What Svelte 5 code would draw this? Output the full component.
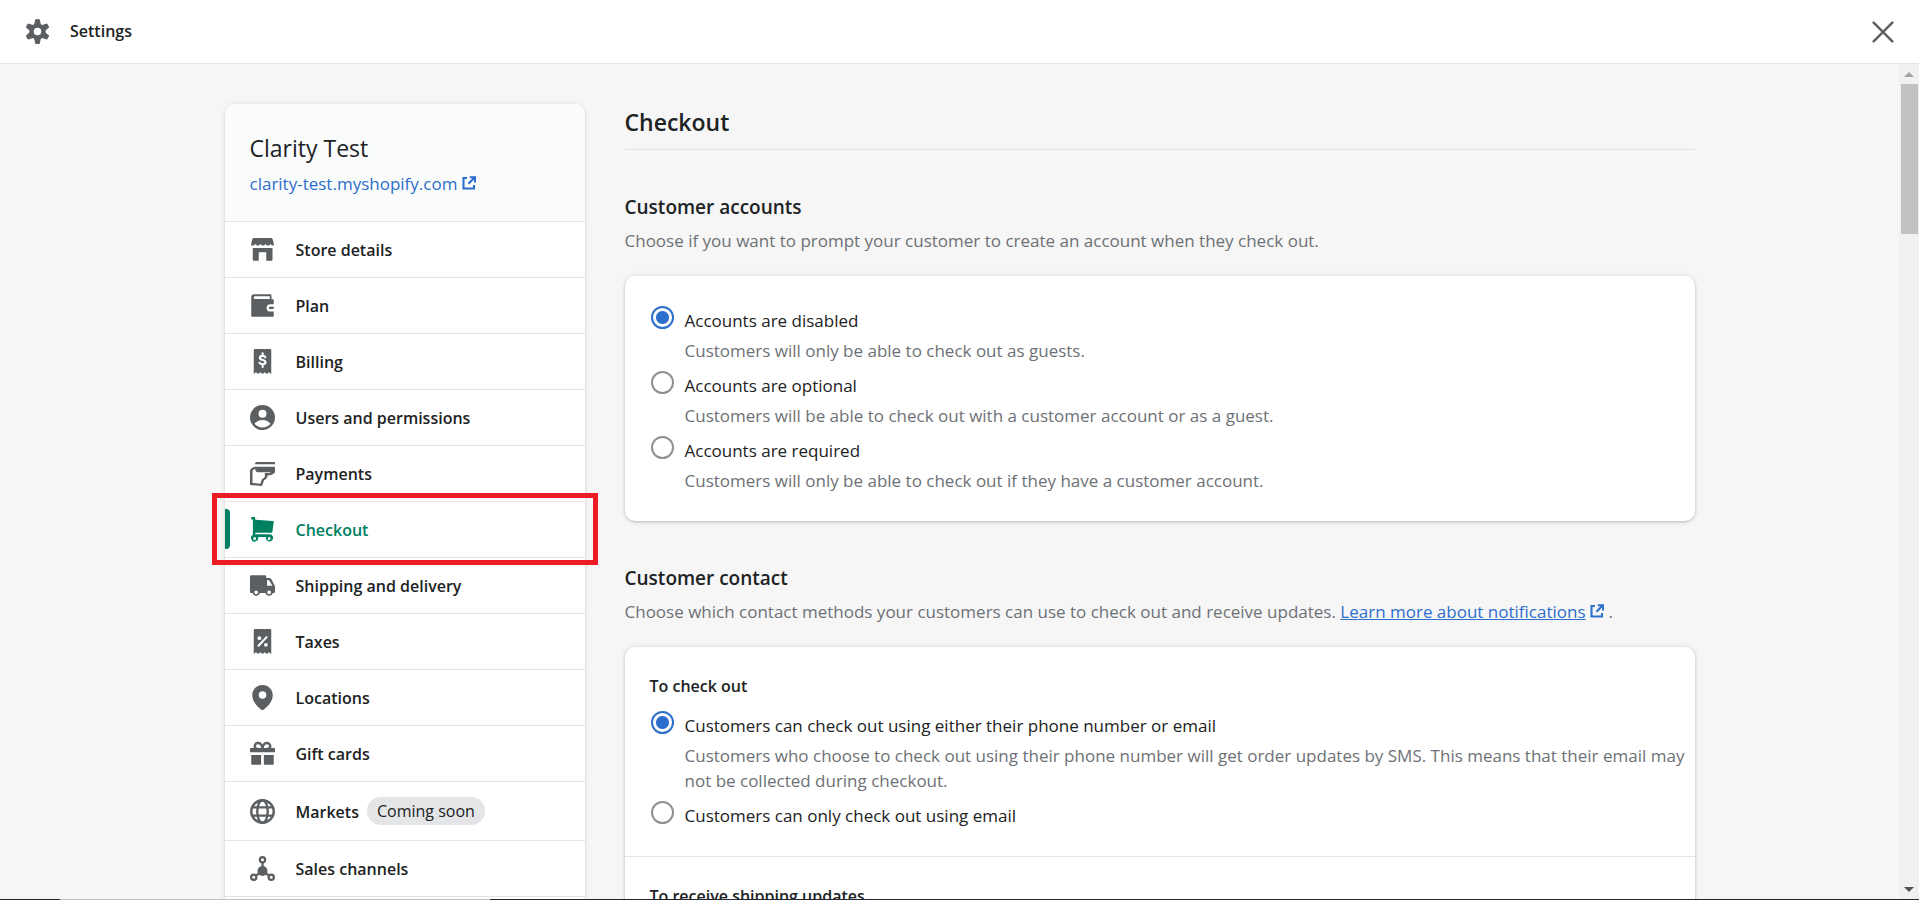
<script lang="ts">
  type NavItem = { id: string; label: string; badge?: string };

  const navItems: NavItem[] = [
    { id: 'store', label: 'Store details' },
    { id: 'plan', label: 'Plan' },
    { id: 'billing', label: 'Billing' },
    { id: 'users', label: 'Users and permissions' },
    { id: 'payments', label: 'Payments' },
    { id: 'checkout', label: 'Checkout' },
    { id: 'shipping', label: 'Shipping and delivery' },
    { id: 'taxes', label: 'Taxes' },
    { id: 'locations', label: 'Locations' },
    { id: 'gift', label: 'Gift cards' },
    { id: 'markets', label: 'Markets', badge: 'Coming soon' },
    { id: 'channels', label: 'Sales channels' }
  ];

  const accountOptions = [
    {
      value: 'disabled',
      label: 'Accounts are disabled',
      help: 'Customers will only be able to check out as guests.'
    },
    {
      value: 'optional',
      label: 'Accounts are optional',
      help: 'Customers will be able to check out with a customer account or as a guest.'
    },
    {
      value: 'required',
      label: 'Accounts are required',
      help: 'Customers will only be able to check out if they have a customer account.'
    }
  ];

  const contactOptions = [
    {
      value: 'phone_or_email',
      label: 'Customers can check out using either their phone number or email',
      help: 'Customers who choose to check out using their phone number will get order updates by SMS. This means that their email may not be collected during checkout.'
    },
    { value: 'email', label: 'Customers can only check out using email', help: '' }
  ];

  let current = $state('checkout');
  let accounts = $state('disabled');
  let contact = $state('phone_or_email');
</script>

{#snippet externalIcon()}
  <svg class="external" viewBox="0 0 14 14" aria-hidden="true">
    <path d="M5 2H1.500v10.500H12V9M7.800 1.200h5.200v5.200M12.400 1.800 6.400 7.800" fill="none" stroke="currentColor" stroke-width="2.100" />
  </svg>
{/snippet}

{#snippet navIcon(id: string)}
  <svg class="icon" viewBox="0 0 20 20" fill="currentColor" aria-hidden="true">
    {#if id === 'store'}
      <path d="M3 .8h14c.6 0 1 .3 1.100.9L19 5v1.800h-1.400l-1.200-1.300-1.200 1.300h-1.600l-1.200-1.300-1.200 1.300H9.600L8.400 5.500 7.200 6.800H5.600L4.400 5.500 3.200 6.800H1V5l.9-3.300C2 1.100 2.400.8 3 .8z" />
      <path d="M2.200 8.800h15.800V18c0 .6-.4 1-1 1h-4v-6.800H7V19H3.200c-.6 0-1-.4-1-1z" />
    {:else if id === 'plan'}
      <path fill-rule="evenodd" d="M3 1h13c.7 0 1.200.5 1.200 1.200V5H18c.6 0 1 .4 1 1v3h-2.800a2.900 2.900 0 0 0 0 5.800H19V18c0 .6-.4 1-1 1H2c-.6 0-1-.4-1-1V3c0-1.100.9-2 2-2zm1 1.600c-.5 0-.9.300-.9.900v.4c0 .6.400.9.900.9h11.800V2.600z" />
      <path d="M16 10.900h3v1.900h-3c-1.300 0-1.300-1.900 0-1.900z" />
    {:else if id === 'billing' || id === 'taxes'}
      <path d="M4 0h12c.6 0 1 .4 1 1v19l-1.800-1.400L13.500 20l-1.700-1.400L10 20l-1.800-1.400L6.500 20l-1.700-1.400L3 20V1c0-.6.400-1 1-1z" />
      {#if id === 'billing'}
        <path d="M12.300 6.600C11.600 5.200 8 5 7.900 7c0 2.300 4.500 1.200 4.500 3.600 0 2.200-4 2-4.800.4M10.100 3.400v2M10.100 12v2.400" fill="none" stroke="#fff" stroke-width="1.700" stroke-linecap="round" />
      {:else}
        <path d="m6.800 13.400 6.500-6.900" stroke="#fff" stroke-width="1.600" stroke-linecap="round" />
        <circle cx="7.500" cy="7.300" r="1.500" fill="#fff" />
        <circle cx="12.700" cy="12.600" r="1.500" fill="#fff" />
      {/if}
    {:else if id === 'users'}
      <path fill-rule="evenodd" d="M10 0a10 10 0 1 1 0 20 10 10 0 0 1 0-20zm0 3.700a3.200 3.200 0 1 0 0 6.400 3.200 3.200 0 0 0 0-6.400zM3.600 15C5 13 7.300 11.900 10 11.900S15 13 16.400 15c-1.500 1.900-3.900 2.900-6.400 2.900S5.100 16.900 3.600 15z" />
    {:else if id === 'payments'}
      <path d="M5.300.8H20v1.700H4C4 1.500 4.600.8 5.300.8z" />
      <path fill-rule="evenodd" d="M4 4.500h16V9c-1.400 1.900-3.600 2.400-6 2.500.1 2-1.200 3.200-2.700 3.700L9.600 20 0 19.200V7.500c.4-1.600 2-2.600 4-3zM4.200 6.400C2.900 6.700 2 7.300 2 8.300v9.200l6.300.6 1.200-3.600c1.700-.6 2.700-1.400 2.400-3.200l-.1-1.700H16l.4-.6H6.300C4.900 8.800 4.200 8 4.200 6.400z" />
    {:else if id === 'checkout'}
      <path fill-rule="evenodd" d="M1 0h2.200c.6 0 1 .4 1 1v1.200l14.100.9c.5 0 .8.4.7.9l-1.100 7.800c-.1.500-.4.800-.9.800H4.200v1.200h11a2.900 2.900 0 1 1-2.400 2.100H6.500a2.900 2.900 0 1 1-4.200-1.700V2H1zM3.700 15.900a1.200 1.200 0 1 0 0 2.400 1.200 1.200 0 0 0 0-2.400zm11.600 0a1.200 1.200 0 1 0 0 2.400 1.200 1.200 0 0 0 0-2.400z" />
    {:else if id === 'shipping'}
      <path fill-rule="evenodd" d="M1 1.700h11c.6 0 1 .4 1 1V4h2.400c.8 0 1.300.3 1.700 1l2.600 5c.2.400.3.700.3 1.100V15c0 .6-.4 1-1 1h-.8a3 3 0 0 1-5.800 0H7.800A3 3 0 0 1 2 16H1c-.6 0-1-.4-1-1V2.700c0-.6.400-1 1-1zm12.600 4v4.500h4.300l-2.300-4.100c-.2-.3-.4-.4-.8-.4zM4.900 13.900a1.500 1.500 0 1 0 0 3 1.500 1.500 0 0 0 0-3zm10.400 0a1.500 1.500 0 1 0 0 3 1.500 1.500 0 0 0 0-3z" />
    {:else if id === 'locations'}
      <path fill-rule="evenodd" d="M10 0c4.600 0 8.200 3.600 8.200 8 0 5.200-3.700 8.900-7.300 11.700-.6.400-1.200.4-1.800 0C5.500 16.900 1.800 13.200 1.800 8c0-4.400 3.600-8 8.200-8zm0 5a3 3 0 1 0 0 6 3 3 0 0 0 0-6z" />
    {:else if id === 'gift'}
      <path d="M0 6.500c0-.6.400-1 1-1h18c.6 0 1 .4 1 1V9H0zM1 11.200h7.900V19H2c-.6 0-1-.4-1-1zM11.100 11.200H19V18c0 .6-.4 1-1 1h-6.900z" />
      <path d="M10 6.500H7C4 6.500 3.400 4.700 4 3.200c.6-1.700 3-2.200 4.500-.9C9.700 3.300 10 5 10 6.500c0-1.500.3-3.200 1.500-4.200 1.500-1.300 3.900-.8 4.500.9.600 1.500 0 3.300-3 3.300z" fill="none" stroke="currentColor" stroke-width="1.900" />
    {:else if id === 'markets'}
      <g fill="none" stroke="currentColor" stroke-width="1.900">
        <circle cx="10" cy="10" r="9" />
        <ellipse cx="10" cy="10" rx="4.200" ry="9" />
        <path d="M1.600 6.700h16.800M1.600 13.300h16.800" />
      </g>
    {:else if id === 'channels'}
      <circle cx="10" cy="12" r="4" />
      <g fill="none" stroke="currentColor" stroke-width="1.800">
        <circle cx="10" cy="3" r="2.100" />
        <circle cx="3" cy="17" r="2.100" />
        <circle cx="17" cy="17" r="2.100" />
        <path d="M10 5v4M5 15.500l2.500-1.700M15 15.500l-2.500-1.700" />
      </g>
    {/if}
  </svg>
{/snippet}

<div class="shell">
  <header class="topbar">
    <svg class="icon" viewBox="0 0 20 20" fill="currentColor" stroke="currentColor" aria-hidden="true">
      <circle cx="10" cy="10" r="6" />
      {#each [0, 60, 120] as angle}
        <path d="M8.700.6h2.600L12.300 5v10l-1 4.400H8.700L7.700 15V5z" stroke-linejoin="round" transform="rotate({angle} 10 10)" />
      {/each}
      <circle cx="10" cy="10" r="3" fill="#fff" stroke="none" />
    </svg>
    <span class="topbar-title">Settings</span>
    <button class="close" type="button" aria-label="Close settings">
      <svg viewBox="0 0 20 20" aria-hidden="true">
        <path d="M1.500 1.500l17 17M18.500 1.500l-17 17" stroke="currentColor" stroke-width="2.200" stroke-linecap="round" />
      </svg>
    </button>
  </header>

  <div class="body">
    <div class="scroll-area">
      <div class="page">
        <aside class="sidebar">
          <div class="store">
            <p class="store-name">Clarity Test</p>
            <a href="#store">clarity-test.myshopify.com {@render externalIcon()}</a>
          </div>
          <nav aria-label="Settings">
            <ul>
              {#each navItems as item (item.id)}
                <li class:active={current === item.id}>
                  <a href="#{item.id}" onclick={() => (current = item.id)}>
                    {@render navIcon(item.id)}
                    <span class="label">{item.label}</span>
                    {#if item.badge}
                      <span class="badge">{item.badge}</span>
                    {/if}
                  </a>
                </li>
              {/each}
            </ul>
          </nav>
        </aside>

        <main>
          <h1>Checkout</h1>

          <section>
            <h2>Customer accounts</h2>
            <p class="intro">Choose if you want to prompt your customer to create an account when they check out.</p>
            <div class="card">
              <div class="card-section">
                {#each accountOptions as option (option.value)}
                  <div class="choice">
                    <input type="radio" id="accounts-{option.value}" name="accounts" value={option.value} bind:group={accounts} />
                    <label for="accounts-{option.value}">{option.label}</label>
                    <p>{option.help}</p>
                  </div>
                {/each}
              </div>
            </div>
          </section>

          <section>
            <h2>Customer contact</h2>
            <p class="intro">
              Choose which contact methods your customers can use to check out and receive updates.
              <a href="#notifications"><span class="underline">Learn more about notifications</span> {@render externalIcon()}</a> .
            </p>
            <div class="card">
              <div class="card-section titled">
                <h3>To check out</h3>
                {#each contactOptions as option (option.value)}
                  <div class="choice">
                    <input type="radio" id="contact-{option.value}" name="contact" value={option.value} bind:group={contact} />
                    <label for="contact-{option.value}">{option.label}</label>
                    {#if option.help}
                      <p>{option.help}</p>
                    {/if}
                  </div>
                {/each}
              </div>
              <div class="card-section titled">
                <h3>To receive shipping updates</h3>
              </div>
            </div>
          </section>
        </main>
      </div>
    </div>

    <div class="scrollbar" aria-hidden="true">
      <div class="arrow up"></div>
      <div class="thumb"></div>
      <div class="arrow down"></div>
    </div>
  </div>

  <div class="bottom-edge" aria-hidden="true"><span></span></div>
</div>

<style>
  :global(body) {
    background: #f6f6f7;
  }
  .shell {
    display: flex;
    flex-direction: column;
    height: 100vh;
    color: #202223;
    font-family: 'Open Sans', 'Noto Sans', sans-serif;
    font-size: 17px;
    line-height: 25px;
  }
  h1, h2, h3, p, ul {
    margin: 0;
    padding: 0;
  }
  a {
    color: #2c6ecb;
    text-decoration: none;
  }
  .icon {
    width: 25px;
    height: 25px;
    flex: none;
    color: #5c5f62;
  }
  .external {
    width: 14px;
    height: 14px;
  }

  .topbar {
    display: flex;
    align-items: center;
    flex: none;
    gap: 20px;
    height: 63px;
    padding: 0 25px;
    border-bottom: 1px solid #e1e3e5;
    background: #fff;
  }
  .topbar-title {
    font-size: 16px;
    font-weight: 600;
  }
  .close {
    margin-left: auto;
    padding: 0;
    border: none;
    background: none;
    color: #5c5f62;
    cursor: pointer;
  }
  .close svg {
    display: block;
    width: 22px;
    height: 22px;
  }

  .body {
    display: flex;
    flex: 1;
    min-height: 0;
  }
  .scroll-area {
    flex: 1;
    min-width: 0;
    overflow: hidden;
  }
  .page {
    display: flex;
    align-items: flex-start;
    gap: 40px;
    max-width: 1470px;
    margin: 0 auto;
    padding: 40px 0 0 20px;
  }

  .sidebar {
    flex: none;
    width: 360px;
    border-radius: 10px;
    background: #fff;
    box-shadow: 0 0 6px rgba(23, 24, 24, 0.08), 0 1px 2px rgba(0, 0, 0, 0.15);
  }
  .store {
    padding: 29px 25px 25px;
    border-radius: 10px 10px 0 0;
    background: #fafbfb;
  }
  .store-name {
    margin-bottom: 8px;
    font-size: 23px;
    line-height: 30px;
  }
  ul {
    padding-bottom: 25px;
    list-style: none;
  }
  li {
    position: relative;
    border-top: 1px solid #e1e3e5;
  }
  li:last-child {
    border-bottom: 1px solid #e1e3e5;
  }
  li a {
    display: flex;
    align-items: center;
    padding: 15px 25px;
    color: inherit;
  }
  li .icon {
    margin-right: 21px;
  }
  .label {
    padding-top: 2px;
    font-size: 16px;
    font-weight: 600;
    line-height: 23px;
  }
  li.active a,
  li.active .icon {
    color: #008060;
  }
  li.active::before {
    content: '';
    position: absolute;
    top: 7px;
    bottom: 8px;
    left: 0;
    width: 5px;
    border-radius: 0 4px 4px 0;
    background: #008060;
  }
  /* frame around the highlighted section */
  li.active::after {
    content: '';
    position: absolute;
    inset: -9px -13px -8px;
    border: 5px solid #ed1c24;
    pointer-events: none;
    z-index: 1;
  }
  .badge {
    margin-left: 8px;
    padding: 2px 10px;
    border-radius: 15px;
    background: #e4e5e7;
    font-size: 16px;
    line-height: 24px;
  }

  main {
    flex: 1;
    min-width: 0;
  }
  h1 {
    padding: 3px 0 12px;
    border-bottom: 1px solid #e1e3e5;
    font-size: 23px;
    font-weight: 600;
    line-height: 30px;
  }
  section {
    padding-top: 42px;
  }
  h2 {
    margin-bottom: 6px;
    font-size: 19px;
    font-weight: 600;
    line-height: 30px;
  }
  .intro {
    margin-bottom: 23px;
    color: #6d7175;
  }
  .underline {
    text-decoration: underline;
  }
  .card {
    border-radius: 10px;
    background: #fff;
    box-shadow: 0 0 6px rgba(23, 24, 24, 0.08), 0 1px 3px rgba(0, 0, 0, 0.2);
  }
  .card-section {
    padding: 30px 5px 20px 25px;
  }
  .card-section.titled {
    padding-top: 27px;
  }
  .card-section + .card-section {
    border-top: 1px solid #e1e3e5;
  }
  h3 {
    margin-bottom: 12px;
    font-size: 16px;
    font-weight: 600;
  }
  .choice {
    display: grid;
    grid-template-columns: 25px 1fr;
    column-gap: 10px;
    padding-bottom: 8px;
  }
  .choice input {
    appearance: none;
    width: 23px;
    height: 23px;
    margin: 0 1px;
    border: 2px solid #8c9196;
    border-radius: 50%;
    background: #fff;
  }
  .choice input:checked {
    border-color: #2c6ecb;
    background: radial-gradient(circle, #2c6ecb 6px, #fff 7px);
  }
  .choice label {
    padding-top: 2px;
  }
  .choice p {
    grid-column: 2;
    padding-top: 5px;
    color: #6d7175;
  }

  .scrollbar {
    display: flex;
    flex-direction: column;
    align-items: center;
    flex: none;
    width: 20px;
    background: #f1f1f1;
  }
  .arrow {
    margin: 8px 0 7px;
    border: 5px solid transparent;
  }
  .arrow.up {
    border-top: none;
    border-bottom-color: #a3a3a3;
  }
  .arrow.down {
    margin-top: auto;
    border-bottom: none;
    border-top-color: #505050;
  }
  .thumb {
    width: 17px;
    height: 18%;
    background: #c1c1c1;
  }
  .bottom-edge {
    display: flex;
    flex: none;
    height: 1px;
    padding-left: 60px;
    background: #202632;
  }
  .bottom-edge span {
    width: 430px;
    background: #c1c1c1;
  }
</style>
